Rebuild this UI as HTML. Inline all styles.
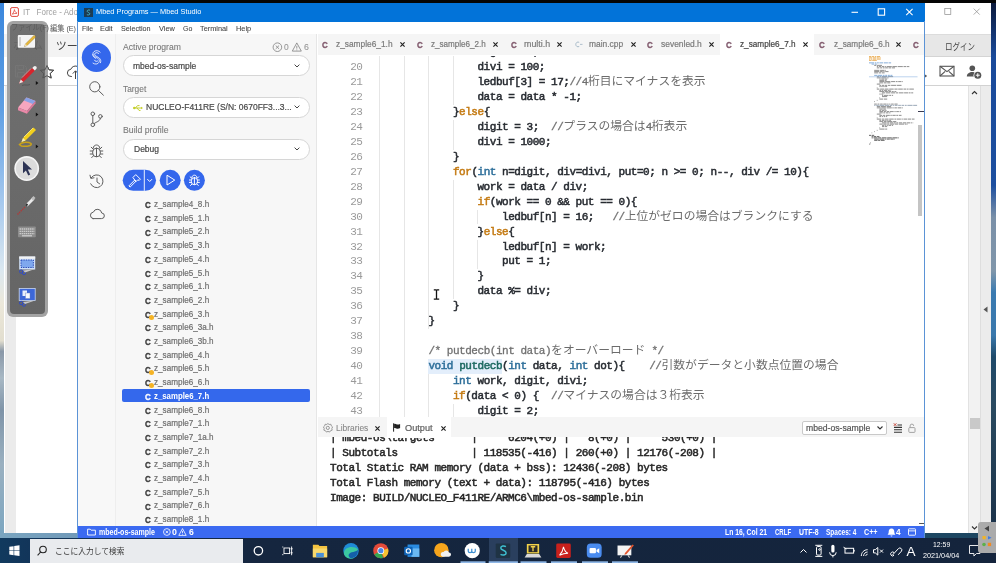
<!DOCTYPE html>
<html><head><meta charset="utf-8"><title>Mbed Studio</title>
<style>
*{box-sizing:border-box;margin:0;padding:0}
html,body{width:996px;height:563px;overflow:hidden;background:#fff}
body{position:relative;filter:blur(0.4px);font-family:"Liberation Sans","Noto Sans CJK JP",sans-serif;font-size:10px;color:#333}
.a{position:absolute}
.t{position:absolute;white-space:pre;line-height:1}
svg{position:absolute;overflow:visible}
.code{position:absolute;left:380px;white-space:pre;font-family:"Liberation Mono","Noto Sans CJK JP",monospace;font-weight:normal;-webkit-text-stroke:0.5px currentColor;font-size:11px;letter-spacing:-0.47px;line-height:14.94px;height:14.94px;color:#272b31}
.ln{position:absolute;left:332px;width:30.5px;white-space:pre;font-family:"Liberation Mono",monospace;font-size:11px;letter-spacing:-0.47px;line-height:14.94px;color:#9a9a9a;text-align:right}
.k{color:#c47a12}.ty{color:#2e6f9a}.fn{color:#1d6a62}
.cm{color:#707070;font-weight:normal;line-height:0;-webkit-text-stroke:0.3px #707070}
.cj{font-family:"Noto Sans CJK JP",sans-serif;font-weight:normal;letter-spacing:0;font-size:11.8px;color:#6c6c6c;line-height:0;-webkit-text-stroke:0}
.out{position:absolute;left:330px;white-space:pre;font-family:"Liberation Mono",monospace;font-weight:normal;-webkit-text-stroke:0.5px currentColor;font-size:11px;letter-spacing:-0.46px;line-height:15px;color:#262626}
.file{position:absolute;left:154px;font-size:9.6px;color:#6a6a6a;white-space:pre;line-height:13.7px;height:13.7px}
.ci{position:absolute;left:144.5px;font-size:10px;font-weight:bold;color:#3c3c3c;line-height:13.7px;height:13.7px}
.tab{position:absolute;top:35px;height:20px;font-size:9.6px;color:#777;white-space:pre;line-height:20px}
.lbl{position:absolute;left:123px;font-size:10.3px;color:#7a7a7a;line-height:1;white-space:pre}
.dd{position:absolute;left:123px;width:186px;height:21px;border:1px solid #d4d4d4;border-radius:11px;background:#fff}
.dd span{position:absolute;left:11px;top:4.5px;font-size:10.3px;color:#444;line-height:1;white-space:pre}

</style></head><body>
<div class="a" style="left:0;top:0;width:996px;height:2.500px;background:#050505"></div>
<div class="a" style="left:0;top:3px;width:5px;height:536px;background:linear-gradient(#3a86dc 0,#5f9fe4 20%,#a5c8ee 37%,#dce8f0 50%,#ece8da 56%,#e2decf 63%,#8a98a8 65%,#a8b8c4 70%,#7f94a8 76%,#9ab0c0 86%,#7aa5c0 100%)"></div>
<div class="a" style="left:0;top:530px;width:996px;height:9px;background:linear-gradient(90deg,#7aa5c0 0,#7099b8 8%,#2a5a78 50%,#1c4560 100%)"></div>
<div class="a" style="left:4px;top:3px;width:987px;height:530px;background:#fff"></div>
<div class="a" style="left:991px;top:3px;width:5px;height:536px;background:linear-gradient(#0c1a3c 0,#1a4a9a 10%,#1d4f9f 34%,#7a90a8 40%,#8096aa 50%,#3a7ab0 54%,#3a78ac 62%,#1f4a6a 66%,#2a4a60 75%,#1a3048 100%)"></div>
<!-- left part -->
<svg style="left:10px;top:6.500px" width="9" height="10" viewBox="0 0 9 10"><rect x="0.600" y="0.600" width="7.800" height="8.800" rx="1.500" fill="#fff" stroke="#e0443a" stroke-width="1"/><path d="M2.200 7.200c1.200-1.200 2-3 2.200-4.600c0.300 1.600 1.300 3 2.600 3.700c-1.600 0-3.300 0.300-4.800 0.900z" fill="none" stroke="#e0443a" stroke-width="0.800"/></svg>
<div class="t" style="left:23px;top:7.800px;font-size:8.600px;color:#a0a0a0;transform:scaleX(0.93);transform-origin:0 0">IT   Force - Adobe</div>
<div class="t" style="left:50px;top:24.600px;font-size:8px;color:#555;transform:scaleX(0.90);transform-origin:0 0">編集 (E)</div>
<div class="a" style="left:4px;top:34px;width:74px;height:22.500px;background:#f3f3f3"></div>
<div class="t" style="left:55.800px;top:41.300px;font-size:11px;color:#444">ツール</div>
<div class="a" style="left:4px;top:85.300px;width:74px;height:0.800px;background:#d2d2d2"></div>
<svg style="left:38px;top:62px" width="40" height="18" viewBox="38 62 40 18"><g fill="none" stroke="#444" stroke-width="1"><path d="M47 65.500l2 4.300l4.700 0.500l-3.500 3.200l1 4.600l-4.200-2.400l-4.200 2.400l1-4.600l-3.500-3.200l4.700-0.500z" stroke-linejoin="round"/><path d="M72 76.500h-0.800a3.600 3.600 0 0 1-0.400-7.200a5 5 0 0 1 7.200-2.600"/><path d="M75.500 79v-8M72.800 73.600l2.700-2.800l2.700 2.800"/></g></svg>
<div class="a" style="left:4.500px;top:86px;width:11px;height:447px;background:#ebebeb"></div>
<!-- right part -->
<svg style="left:940px;top:5px" width="50" height="14" viewBox="940 5 50 14"><g fill="none" stroke="#8a8a8a" stroke-width="0.700"><rect x="944.800" y="8.600" width="6" height="6"/><path d="M973.700 8.600l6 6M979.700 8.600l-6 6"/></g></svg>
<div class="a" style="left:925px;top:34px;width:66px;height:23px;background:#e7e7e7;border-top:1px solid #dcdcdc;border-bottom:1px solid #d4d4d4"></div>
<div class="t" style="left:944.600px;top:41.600px;font-size:9.600px;color:#444;transform:scaleX(0.78);transform-origin:0 0">ログイン</div>
<svg style="left:925px;top:60px" width="66" height="22" viewBox="925 60 66 22">
<path d="M925.200 74.500l1.800 1.500l-1.800 1.500z" fill="#333"/>
<g fill="none" stroke="#555" stroke-width="1.100"><rect x="940" y="66.300" width="14" height="9.700"/><path d="M940 66.300l7 5.300l7-5.300M940 76l5.200-4.600M954 76l-5.200-4.600"/></g>
<circle cx="972.300" cy="68.300" r="2.800" fill="#555"/><path d="M966.800 76.500c0-6 11-6 11 0z" fill="#555"/>
<circle cx="977.800" cy="75.200" r="4.300" fill="#fff"/><circle cx="977.800" cy="75.200" r="3.500" fill="#555"/><path d="M975.800 75.200h4M977.800 73.200v4" stroke="#fff" stroke-width="1"/>
</svg>
<div class="a" style="left:925px;top:85.300px;width:66px;height:0.800px;background:#d2d2d2"></div>
<div class="a" style="left:968.300px;top:86px;width:12px;height:447px;background:#f2f2f2;border-left:1px solid #e2e2e2"></div>
<div class="a" style="left:980px;top:86px;width:11px;height:447px;background:#ececec;border-left:1px solid #dedede"></div>
<div class="a" style="left:969.500px;top:418px;width:10px;height:10.700px;background:#c9c9c9"></div>
<svg style="left:968px;top:88px" width="24" height="446" viewBox="968 88 24 446"><g fill="none" stroke="#333" stroke-width="1.100"><path d="M972 94l2.500-2.500l2.500 2.500"/><path d="M972 526.500l2.500 2.500l2.500-2.500"/></g><path d="M987.500 306.500l-4 3l4 3z" fill="#555"/></svg>

<div class="a" style="left:6.5px;top:21.300px;width:41.500px;height:295.700px;border-radius:6px;background:#a3a3a3"></div>
<div class="a" style="left:9.500px;top:24px;width:35.500px;height:289.500px;border-radius:4px;background:linear-gradient(#707070,#656565)"></div>
<div class="t" style="left:11px;top:23.500px;font-size:8px;color:#5c5c5c;transform:scaleX(0.9);transform-origin:0 0">ファイル(F)</div>
<div class="t" style="left:13px;top:40.500px;font-size:10px;color:#636363">ホーム</div>
<svg style="left:9px;top:23px" width="37" height="291" viewBox="9 23 37 291">
<path d="M47 65.500l2 4.300l4.700 0.500l-3.500 3.200l1 4.600l-4.200-2.400l-4.200 2.400l1-4.600l-3.500-3.200l4.700-0.500z" fill="none" stroke="#505050" stroke-width="0.9" stroke-linejoin="round" clip-path="inset(0 0 0 0)"/>
<!-- save icon ghost -->
<path d="M15.500 65.500h9l2 2v9.500h-11zM18 65.500v4h5.500v-4M17.500 77v-4.500h7v4.500" fill="none" stroke="#757575" stroke-width="1"/>
<!-- whiteboard + pencil -->
<rect x="17.800" y="35" width="17.200" height="12.800" rx="1" fill="#f4f4f4"/>
<path d="M20 37v9" stroke="#999" stroke-width="0.800"/>
<path d="M24.500 46.500l1-2.600l8.600-8.600l1.600 1.600l-8.600 8.600z" fill="#e8b93a" stroke="#8a6a1a" stroke-width="0.400"/>
<path d="M24.500 46.500l1-2.600l1.600 1.600z" fill="#f3e2b8"/>
<path d="M16 49.500l2-1.500M37 49.500l-2-1.500" stroke="#555" stroke-width="0.800"/>
<!-- red pen -->
<path d="M19 83.500l1.800-4l11.500-11.500l2.500 2.500l-11.500 11.500z" fill="#d8242c"/>
<path d="M32.300 68l1.400-1.400c0.700-0.700 1.800-0.700 2.500 0c0.700 0.700 0.700 1.800 0 2.500l-1.400 1.400z" fill="#f0f0f0"/>
<path d="M19 83.500l1.800-4l2.500 2.500z" fill="#e8e8e8"/>
<path d="M22 77.500l9-9" stroke="#f08a8a" stroke-width="0.800"/>
<path d="M22 85.500c3-1.500 5 0.500 8-1" fill="none" stroke="#555" stroke-width="0.900"/>
<path d="M35.800 81l2.600 2l-2.600 2z" fill="#111"/>
<!-- eraser -->
<path d="M18 107.500l8.500-10l9 3.500l-8.500 10z" fill="#f7a6bf"/>
<path d="M26.500 97.500l9 3.500l-2.600 3l-9-3.500z" fill="#8aa2e6"/>
<path d="M18 107.500l9 3.500v2.800l-9-3.500z" fill="#e989a8"/>
<path d="M27 111l8.500-10v2.600l-8.500 10.200z" fill="#d9789a"/>
<path d="M35.800 112.500l2.600 2l-2.600 2z" fill="#111"/>
<!-- highlighter -->
<path d="M21.500 142l1.500-4l10.500-10.500l2.500 2.500l-10.500 10.500z" fill="#f2cf1d"/>
<path d="M21.500 142l1.500-4l2.500 2.500z" fill="#f3ecc0"/>
<path d="M24 137l9-9" stroke="#fbe97a" stroke-width="0.900"/>
<path d="M19.500 144.500c2-2.500 9-3 11.500-1c1.500 1.500-3 3.500-9.500 2.500z" fill="none" stroke="#c9a21a" stroke-width="1.500"/>
<path d="M35.800 144.500l2.600 2l-2.600 2z" fill="#111"/>
<!-- cursor circle -->
<circle cx="26.700" cy="168.500" r="12.400" fill="#f6f6f6"/>
<circle cx="26.700" cy="168.500" r="10.800" fill="#dcdcdc"/>
<path d="M23 161l9 8.500h-4.200l2.400 5l-1.900 0.900l-2.400-5l-2.900 2.900z" fill="#2c3354"/>
<!-- laser pointer -->
<path d="M25.500 204.500l7-7l2 2l-7 7z" fill="#e9e9e9"/>
<path d="M31 198.500l2.500-2.500l2 2l-2.500 2.500z" fill="#bdbdbd"/>
<path d="M27.500 204l-1.500 1.500" stroke="#333" stroke-width="2"/>
<path d="M25 207l-7.500 7.500" stroke="#b03a3a" stroke-width="1.400" stroke-dasharray="1.500 0.800"/>
<!-- keyboard -->
<rect x="18" y="226.600" width="17.800" height="10.700" rx="0.800" fill="#8c8c8c"/>
<path d="M19.500 229h15M19.500 231.300h15M19.500 233.600h15" stroke="#c9c9c9" stroke-width="1.300" stroke-dasharray="1.500 0.600"/>
<path d="M22 235.800h10" stroke="#d5d5d5" stroke-width="1.100"/>
<!-- screen capture 1 -->
<rect x="19.200" y="256.500" width="16" height="13" fill="#cfe0f8"/>
<rect x="19.200" y="256.500" width="16" height="2.200" fill="#f2f2f2"/>
<rect x="21" y="260" width="12.400" height="7.500" fill="#7fa8ee" stroke="#1f3fae" stroke-width="0.900" stroke-dasharray="1.400 1"/>
<circle cx="21.200" cy="271.500" r="1.700" fill="none" stroke="#2d49c9" stroke-width="0.900"/><circle cx="24" cy="273" r="1.700" fill="none" stroke="#2d49c9" stroke-width="0.900"/>
<path d="M23 270.500l12-1.500l-10 3.600z" fill="#c8c8c8"/>
<!-- screen capture 2 -->
<rect x="19.200" y="288.500" width="16" height="12" fill="#3d67d8" stroke="#c9d6f2" stroke-width="0.800"/>
<rect x="22.500" y="290.500" width="4.500" height="5.500" fill="#e9eefa"/><rect x="25.500" y="293" width="4.500" height="5.500" fill="#f6f8fd" stroke="#6a7fbf" stroke-width="0.400"/>
<circle cx="21.200" cy="303" r="1.700" fill="none" stroke="#2d49c9" stroke-width="0.900"/><circle cx="24" cy="304.600" r="1.700" fill="none" stroke="#2d49c9" stroke-width="0.900"/>
<path d="M23 302l12-1.500l-10 3.600z" fill="#c8c8c8"/>
</svg>

<div class="a" style="left:77px;top:3px;width:848px;height:536px;background:#fff;"></div>
<div class="a" style="left:77px;top:2.5px;width:848px;height:19px;background:#0273d9;"></div>
<svg style="left:83.5px;top:7.5px" width="9" height="9" viewBox="0 0 9 9"><rect width="9" height="9" fill="#1d3c52"/><path d="M6 2.2C4.5 1.6 3 2.2 3.2 3.4C3.4 4.6 5.8 4.4 5.8 5.8C5.8 7 4 7.2 2.9 6.6" fill="none" stroke="#45b5c9" stroke-width="0.9"/></svg>
<div class="t" style="left:96.00px;top:7.34px;font-size:8.1px;line-height:9.72px;color:#fff;transform:scaleX(0.9119);transform-origin:0 50%;">Mbed Programs — Mbed Studio</div>
<svg style="left:850px;top:3px" width="70" height="18" viewBox="0 0 70 18"><g stroke="#fff" stroke-width="1.1" fill="none"><path d="M1.5 9.3h6.5"/><rect x="28.2" y="5.8" width="6.4" height="6.4"/><path d="M56.2 5.8l6.4 6.4M62.6 5.8l-6.4 6.4"/></g></svg>
<div class="t" style="left:81.70px;top:23.50px;font-size:8.0px;line-height:9.60px;color:#444;-webkit-text-stroke:0.08px #444;transform:scaleX(0.8611);transform-origin:0 50%;">File</div>
<div class="t" style="left:100.30px;top:23.50px;font-size:8.0px;line-height:9.60px;color:#444;-webkit-text-stroke:0.08px #444;transform:scaleX(0.9140);transform-origin:0 50%;">Edit</div>
<div class="t" style="left:121.20px;top:23.50px;font-size:8.0px;line-height:9.60px;color:#444;-webkit-text-stroke:0.08px #444;transform:scaleX(0.8995);transform-origin:0 50%;">Selection</div>
<div class="t" style="left:158.80px;top:23.50px;font-size:8.0px;line-height:9.60px;color:#444;-webkit-text-stroke:0.08px #444;transform:scaleX(0.9189);transform-origin:0 50%;">View</div>
<div class="t" style="left:182.70px;top:23.50px;font-size:8.0px;line-height:9.60px;color:#444;-webkit-text-stroke:0.08px #444;transform:scaleX(0.8715);transform-origin:0 50%;">Go</div>
<div class="t" style="left:200.20px;top:23.50px;font-size:8.0px;line-height:9.60px;color:#444;-webkit-text-stroke:0.08px #444;transform:scaleX(0.9163);transform-origin:0 50%;">Terminal</div>
<div class="t" style="left:235.90px;top:23.50px;font-size:8.0px;line-height:9.60px;color:#444;-webkit-text-stroke:0.08px #444;transform:scaleX(0.9178);transform-origin:0 50%;">Help</div>
<div class="a" style="left:78px;top:34px;width:38px;height:492px;background:#f8f8f8;"></div>
<div class="a" style="left:114.5px;top:34px;width:1.5px;height:492px;background:#eeeeee;"></div>
<div class="a" style="left:116px;top:34px;width:200px;height:492px;background:#f7f7f7;"></div>
<div class="a" style="left:316px;top:34px;width:1.2px;height:492px;background:#e6e6e6;"></div>
<svg style="left:78px;top:34px" width="38" height="200" viewBox="78 34 38 200">
<circle cx="96.4" cy="57.4" r="14.6" fill="#3467ec"/>
<g fill="none" stroke="#fff" stroke-width="0.8" stroke-linecap="round">
<path d="M100.2 52.2c-1.2-1.6-4.4-2.2-6.2-0.6c-2 1.8-0.8 4.2 1.6 5.4c2.6 1.3 4.6 2.6 3.4 5.2c-1 2.2-4.2 2.4-6 1"/>
<path d="M98.6 53.4c-0.9-0.9-2.6-1-3.5-0.2c-1 1-0.3 2.300 1.300 3.100c2.900 1.400 5.400 3.200 4.100 6.400"/>
<path d="M94.400 60.200c0.700 1.400 2.700 1.700 3.500 0.600"/>
<path d="M92.600 54.600c0.100 2 1.800 3 3.300 3.800"/>
</g>
<g fill="none" stroke="#5e5e5e" stroke-width="1" stroke-linecap="round" stroke-linejoin="round">
<circle cx="94.8" cy="86.800" r="5.100"/><path d="M98.600 90.600l4.800 4.600"/>
<circle cx="92.800" cy="113.800" r="1.800"/><circle cx="92.800" cy="124.800" r="1.800"/><circle cx="100.400" cy="116.400" r="1.800"/>
<path d="M92.800 115.600v7.400M100.400 118.200c0 3-3.600 3.400-6 5.200"/>
<!-- bug -->
<path d="M93.200 148.200c0-4.400 6.600-4.400 6.600 0"/>
<rect x="92.700" y="148.200" width="7.600" height="8.600" rx="3.600"/>
<path d="M96.500 148.400v8.200M92.700 151h-2.500M92.700 154h-2.500M100.300 151h2.500M100.300 154h2.500M93 149l-1.800-1.800M100 149l1.800-1.800M93.300 156l-1.600 1.600M99.700 156l1.600 1.600"/>
<!-- history -->
<path d="M91.300 177.600a6.400 6.400 0 1 1-0.600 6.200"/>
<path d="M90 175.200l0.800 3.200l3.200-0.600"/>
<path d="M97 178v4l2.600 1.800"/>
<!-- cloud -->
<path d="M93 218.600h8.400a2.800 2.800 0 0 0 0.300-5.600a4.300 4.300 0 0 0-8.300-0.900a3.300 3.300 0 0 0-0.400 6.500z"/>
</g>
</svg>

<div class="t" style="left:123.00px;top:41.06px;font-size:9.9px;line-height:11.88px;color:#787878;-webkit-text-stroke:0.1px #787878;transform:scaleX(0.8713);transform-origin:0 50%;">Active program</div>
<div class="t" style="left:123.00px;top:82.96px;font-size:9.9px;line-height:11.88px;color:#787878;-webkit-text-stroke:0.1px #787878;transform:scaleX(0.8469);transform-origin:0 50%;">Target</div>
<div class="t" style="left:123.00px;top:124.26px;font-size:9.9px;line-height:11.88px;color:#787878;-webkit-text-stroke:0.1px #787878;transform:scaleX(0.8816);transform-origin:0 50%;">Build profile</div>
<div class="a" style="left:122.5px;top:54.8px;width:187px;height:21.7px;border:1px solid #d6d6d6;border-radius:10.5px;background:#fff"></div>
<div class="t" style="left:133.30px;top:59.76px;font-size:9.9px;line-height:11.88px;color:#484848;-webkit-text-stroke:0.22px #484848;transform:scaleX(0.8613);transform-origin:0 50%;">mbed-os-sample</div>
<svg style="left:293.5px;top:63.9px" width="6" height="4" viewBox="0 0 6 4"><path d="M0.6 0.6L3 3L5.4 0.6" fill="none" stroke="#444" stroke-width="1"/></svg>
<div class="a" style="left:122.5px;top:97px;width:187px;height:21px;border:1px solid #d6d6d6;border-radius:10.5px;background:#fff"></div>
<div class="t" style="left:146.00px;top:101.26px;font-size:9.9px;line-height:11.88px;color:#484848;-webkit-text-stroke:0.22px #484848;transform:scaleX(0.8598);transform-origin:0 50%;">NUCLEO-F411RE (S/N: 0670FF3...3...</div>
<svg style="left:293.5px;top:105.4px" width="6" height="4" viewBox="0 0 6 4"><path d="M0.6 0.6L3 3L5.4 0.6" fill="none" stroke="#444" stroke-width="1"/></svg>
<div class="a" style="left:122.5px;top:138.7px;width:187px;height:21px;border:1px solid #d6d6d6;border-radius:10.5px;background:#fff"></div>
<div class="t" style="left:133.50px;top:142.96px;font-size:9.9px;line-height:11.88px;color:#484848;-webkit-text-stroke:0.22px #484848;transform:scaleX(0.8604);transform-origin:0 50%;">Debug</div>
<svg style="left:293.5px;top:147.1px" width="6" height="4" viewBox="0 0 6 4"><path d="M0.6 0.6L3 3L5.4 0.6" fill="none" stroke="#444" stroke-width="1"/></svg>
<svg style="left:132.5px;top:103.5px" width="10" height="8" viewBox="0 0 10 8"><g stroke="#c4cf2a" stroke-width="1" fill="none"><path d="M0.5 4h8"/><path d="M2.5 4l2-2.4h2"/><path d="M4 4l2 2.4h1.5"/></g><circle cx="1.3" cy="4" r="1.2" fill="#c4cf2a"/><path d="M8 2.7l2 1.3l-2 1.3z" fill="#c4cf2a"/></svg>
<svg style="left:272px;top:42px" width="32" height="11" viewBox="272 42 32 11"><g stroke="#858585" stroke-width="0.85" fill="none"><circle cx="277.4" cy="47.2" r="4.3"/><path d="M275.7 45.5l3.400 3.400M279.100 45.500l-3.400 3.400"/><path d="M296.800 42.900l4.500 8.200h-9z" stroke-linejoin="round"/><path d="M296.800 45.800v2.800M296.800 49.500v0.800"/></g></svg>
<div class="t" style="left:284.30px;top:41.36px;font-size:9.9px;line-height:11.88px;color:#979797;-webkit-text-stroke:0.1px #979797;transform:scaleX(0.8537);transform-origin:0 50%;">0</div>
<div class="t" style="left:304.00px;top:41.36px;font-size:9.9px;line-height:11.88px;color:#979797;-webkit-text-stroke:0.1px #979797;transform:scaleX(0.8900);transform-origin:0 50%;">6</div>
<svg style="left:122px;top:169px" width="84" height="23" viewBox="122 169 84 23">
<rect x="122.700" y="169.800" width="33.300" height="21" rx="10.500" fill="#3467ec"/>
<path d="M144.300 169.800v21" stroke="#fff" stroke-width="0.900"/>
<circle cx="170.200" cy="180.300" r="10.500" fill="#3467ec"/>
<circle cx="194.400" cy="180.300" r="10.500" fill="#3467ec"/>
<g fill="none" stroke="#fff" stroke-width="1" stroke-linecap="round" stroke-linejoin="round">
<!-- hammer -->
<path d="M129.200 185.600l5.600-5.600l1.200 1.200l-5.600 5.600z"/>
<path d="M133.200 177.200l2.600-2.600l4.600 4.600l-1.200 1.200l-1.400-0.600l-1.600 1.600z"/>
<!-- chevron -->
<path d="M147.600 179.400l2.100 2.100l2.100-2.100"/>
<!-- play -->
<path d="M167 175.600v9.400l7.400-4.700z"/>
<!-- bug -->
<path d="M191.800 177.700c0-3.500 5.200-3.500 5.200 0"/>
<rect x="191.400" y="177.700" width="6" height="7" rx="2.900"/>
<path d="M194.400 177.900v6.600M191.400 180h-2M191.400 182.400h-2M197.400 180h2M197.400 182.400h2M191.600 178.300l-1.500-1.500M197.200 178.300l1.500-1.500M191.800 184.200l-1.300 1.300M197 184.200l1.300 1.300"/>
</g>
</svg>

<div class="t" style="left:144.50px;top:199.14px;font-size:9.6px;line-height:11.52px;color:#383838;font-weight:bold;transform:scaleX(0.8366);transform-origin:0 50%;-webkit-text-stroke:0.35px;">C</div>
<div class="t" style="left:154.00px;top:198.06px;font-size:9.9px;line-height:11.88px;color:#6e6e6e;-webkit-text-stroke:0.22px #6e6e6e;transform:scaleX(0.8237);transform-origin:0 50%;">z_sample4_8.h</div>
<div class="t" style="left:144.50px;top:212.84px;font-size:9.6px;line-height:11.52px;color:#383838;font-weight:bold;transform:scaleX(0.8366);transform-origin:0 50%;-webkit-text-stroke:0.35px;">C</div>
<div class="t" style="left:154.00px;top:211.76px;font-size:9.9px;line-height:11.88px;color:#6e6e6e;-webkit-text-stroke:0.22px #6e6e6e;transform:scaleX(0.8237);transform-origin:0 50%;">z_sample5_1.h</div>
<div class="t" style="left:144.50px;top:226.54px;font-size:9.6px;line-height:11.52px;color:#383838;font-weight:bold;transform:scaleX(0.8366);transform-origin:0 50%;-webkit-text-stroke:0.35px;">C</div>
<div class="t" style="left:154.00px;top:225.46px;font-size:9.9px;line-height:11.88px;color:#6e6e6e;-webkit-text-stroke:0.22px #6e6e6e;transform:scaleX(0.8237);transform-origin:0 50%;">z_sample5_2.h</div>
<div class="t" style="left:144.50px;top:240.24px;font-size:9.6px;line-height:11.52px;color:#383838;font-weight:bold;transform:scaleX(0.8366);transform-origin:0 50%;-webkit-text-stroke:0.35px;">C</div>
<div class="t" style="left:154.00px;top:239.16px;font-size:9.9px;line-height:11.88px;color:#6e6e6e;-webkit-text-stroke:0.22px #6e6e6e;transform:scaleX(0.8237);transform-origin:0 50%;">z_sample5_3.h</div>
<div class="t" style="left:144.50px;top:253.94px;font-size:9.6px;line-height:11.52px;color:#383838;font-weight:bold;transform:scaleX(0.8366);transform-origin:0 50%;-webkit-text-stroke:0.35px;">C</div>
<div class="t" style="left:154.00px;top:252.86px;font-size:9.9px;line-height:11.88px;color:#6e6e6e;-webkit-text-stroke:0.22px #6e6e6e;transform:scaleX(0.8237);transform-origin:0 50%;">z_sample5_4.h</div>
<div class="t" style="left:144.50px;top:267.64px;font-size:9.6px;line-height:11.52px;color:#383838;font-weight:bold;transform:scaleX(0.8366);transform-origin:0 50%;-webkit-text-stroke:0.35px;">C</div>
<div class="t" style="left:154.00px;top:266.56px;font-size:9.9px;line-height:11.88px;color:#6e6e6e;-webkit-text-stroke:0.22px #6e6e6e;transform:scaleX(0.8237);transform-origin:0 50%;">z_sample5_5.h</div>
<div class="t" style="left:144.50px;top:281.34px;font-size:9.6px;line-height:11.52px;color:#383838;font-weight:bold;transform:scaleX(0.8366);transform-origin:0 50%;-webkit-text-stroke:0.35px;">C</div>
<div class="t" style="left:154.00px;top:280.26px;font-size:9.9px;line-height:11.88px;color:#6e6e6e;-webkit-text-stroke:0.22px #6e6e6e;transform:scaleX(0.8237);transform-origin:0 50%;">z_sample6_1.h</div>
<div class="t" style="left:144.50px;top:295.04px;font-size:9.6px;line-height:11.52px;color:#383838;font-weight:bold;transform:scaleX(0.8366);transform-origin:0 50%;-webkit-text-stroke:0.35px;">C</div>
<div class="t" style="left:154.00px;top:293.96px;font-size:9.9px;line-height:11.88px;color:#6e6e6e;-webkit-text-stroke:0.22px #6e6e6e;transform:scaleX(0.8237);transform-origin:0 50%;">z_sample6_2.h</div>
<div class="t" style="left:144.50px;top:308.74px;font-size:9.6px;line-height:11.52px;color:#383838;font-weight:bold;transform:scaleX(0.8366);transform-origin:0 50%;-webkit-text-stroke:0.35px;">C</div>
<div class="t" style="left:154.00px;top:307.66px;font-size:9.9px;line-height:11.88px;color:#6e6e6e;-webkit-text-stroke:0.22px #6e6e6e;transform:scaleX(0.8237);transform-origin:0 50%;">z_sample6_3.h</div>
<div class="a" style="left:148.5px;top:314.8px;width:5px;height:5px;border-radius:50%;background:#f5b324"></div>
<div class="t" style="left:144.50px;top:322.44px;font-size:9.6px;line-height:11.52px;color:#383838;font-weight:bold;transform:scaleX(0.8366);transform-origin:0 50%;-webkit-text-stroke:0.35px;">C</div>
<div class="t" style="left:154.00px;top:321.36px;font-size:9.9px;line-height:11.88px;color:#6e6e6e;-webkit-text-stroke:0.22px #6e6e6e;transform:scaleX(0.8204);transform-origin:0 50%;">z_sample6_3a.h</div>
<div class="t" style="left:144.50px;top:336.14px;font-size:9.6px;line-height:11.52px;color:#383838;font-weight:bold;transform:scaleX(0.8366);transform-origin:0 50%;-webkit-text-stroke:0.35px;">C</div>
<div class="t" style="left:154.00px;top:335.06px;font-size:9.9px;line-height:11.88px;color:#6e6e6e;-webkit-text-stroke:0.22px #6e6e6e;transform:scaleX(0.8204);transform-origin:0 50%;">z_sample6_3b.h</div>
<div class="t" style="left:144.50px;top:349.84px;font-size:9.6px;line-height:11.52px;color:#383838;font-weight:bold;transform:scaleX(0.8366);transform-origin:0 50%;-webkit-text-stroke:0.35px;">C</div>
<div class="t" style="left:154.00px;top:348.76px;font-size:9.9px;line-height:11.88px;color:#6e6e6e;-webkit-text-stroke:0.22px #6e6e6e;transform:scaleX(0.8237);transform-origin:0 50%;">z_sample6_4.h</div>
<div class="t" style="left:144.50px;top:363.54px;font-size:9.6px;line-height:11.52px;color:#383838;font-weight:bold;transform:scaleX(0.8366);transform-origin:0 50%;-webkit-text-stroke:0.35px;">C</div>
<div class="t" style="left:154.00px;top:362.46px;font-size:9.9px;line-height:11.88px;color:#6e6e6e;-webkit-text-stroke:0.22px #6e6e6e;transform:scaleX(0.8237);transform-origin:0 50%;">z_sample6_5.h</div>
<div class="a" style="left:148.5px;top:369.6px;width:5px;height:5px;border-radius:50%;background:#f5b324"></div>
<div class="t" style="left:144.50px;top:377.24px;font-size:9.6px;line-height:11.52px;color:#383838;font-weight:bold;transform:scaleX(0.8366);transform-origin:0 50%;-webkit-text-stroke:0.35px;">C</div>
<div class="t" style="left:154.00px;top:376.16px;font-size:9.9px;line-height:11.88px;color:#6e6e6e;-webkit-text-stroke:0.22px #6e6e6e;transform:scaleX(0.8237);transform-origin:0 50%;">z_sample6_6.h</div>
<div class="a" style="left:148.5px;top:383.3px;width:5px;height:5px;border-radius:50%;background:#f5b324"></div>
<div class="a" style="left:121.5px;top:388.9px;width:188.5px;height:13.6px;background:#3468ec;border-radius:2px"></div>
<div class="t" style="left:144.50px;top:390.94px;font-size:9.6px;line-height:11.52px;color:#fff;font-weight:bold;transform:scaleX(0.8366);transform-origin:0 50%;-webkit-text-stroke:0.35px;">C</div>
<div class="t" style="left:154.00px;top:389.86px;font-size:9.9px;line-height:11.88px;color:#fff;font-weight:bold;transform:scaleX(0.7913);transform-origin:0 50%;">z_sample6_7.h</div>
<div class="t" style="left:144.50px;top:404.64px;font-size:9.6px;line-height:11.52px;color:#383838;font-weight:bold;transform:scaleX(0.8366);transform-origin:0 50%;-webkit-text-stroke:0.35px;">C</div>
<div class="t" style="left:154.00px;top:403.56px;font-size:9.9px;line-height:11.88px;color:#6e6e6e;-webkit-text-stroke:0.22px #6e6e6e;transform:scaleX(0.8237);transform-origin:0 50%;">z_sample6_8.h</div>
<div class="t" style="left:144.50px;top:418.34px;font-size:9.6px;line-height:11.52px;color:#383838;font-weight:bold;transform:scaleX(0.8366);transform-origin:0 50%;-webkit-text-stroke:0.35px;">C</div>
<div class="t" style="left:154.00px;top:417.26px;font-size:9.9px;line-height:11.88px;color:#6e6e6e;-webkit-text-stroke:0.22px #6e6e6e;transform:scaleX(0.8237);transform-origin:0 50%;">z_sample7_1.h</div>
<div class="t" style="left:144.50px;top:432.04px;font-size:9.6px;line-height:11.52px;color:#383838;font-weight:bold;transform:scaleX(0.8366);transform-origin:0 50%;-webkit-text-stroke:0.35px;">C</div>
<div class="t" style="left:154.00px;top:430.96px;font-size:9.9px;line-height:11.88px;color:#6e6e6e;-webkit-text-stroke:0.22px #6e6e6e;transform:scaleX(0.8204);transform-origin:0 50%;">z_sample7_1a.h</div>
<div class="t" style="left:144.50px;top:445.74px;font-size:9.6px;line-height:11.52px;color:#383838;font-weight:bold;transform:scaleX(0.8366);transform-origin:0 50%;-webkit-text-stroke:0.35px;">C</div>
<div class="t" style="left:154.00px;top:444.66px;font-size:9.9px;line-height:11.88px;color:#6e6e6e;-webkit-text-stroke:0.22px #6e6e6e;transform:scaleX(0.8237);transform-origin:0 50%;">z_sample7_2.h</div>
<div class="t" style="left:144.50px;top:459.44px;font-size:9.6px;line-height:11.52px;color:#383838;font-weight:bold;transform:scaleX(0.8366);transform-origin:0 50%;-webkit-text-stroke:0.35px;">C</div>
<div class="t" style="left:154.00px;top:458.36px;font-size:9.9px;line-height:11.88px;color:#6e6e6e;-webkit-text-stroke:0.22px #6e6e6e;transform:scaleX(0.8237);transform-origin:0 50%;">z_sample7_3.h</div>
<div class="t" style="left:144.50px;top:473.14px;font-size:9.6px;line-height:11.52px;color:#383838;font-weight:bold;transform:scaleX(0.8366);transform-origin:0 50%;-webkit-text-stroke:0.35px;">C</div>
<div class="t" style="left:154.00px;top:472.06px;font-size:9.9px;line-height:11.88px;color:#6e6e6e;-webkit-text-stroke:0.22px #6e6e6e;transform:scaleX(0.8237);transform-origin:0 50%;">z_sample7_4.h</div>
<div class="t" style="left:144.50px;top:486.84px;font-size:9.6px;line-height:11.52px;color:#383838;font-weight:bold;transform:scaleX(0.8366);transform-origin:0 50%;-webkit-text-stroke:0.35px;">C</div>
<div class="t" style="left:154.00px;top:485.76px;font-size:9.9px;line-height:11.88px;color:#6e6e6e;-webkit-text-stroke:0.22px #6e6e6e;transform:scaleX(0.8237);transform-origin:0 50%;">z_sample7_5.h</div>
<div class="t" style="left:144.50px;top:500.54px;font-size:9.6px;line-height:11.52px;color:#383838;font-weight:bold;transform:scaleX(0.8366);transform-origin:0 50%;-webkit-text-stroke:0.35px;">C</div>
<div class="t" style="left:154.00px;top:499.46px;font-size:9.9px;line-height:11.88px;color:#6e6e6e;-webkit-text-stroke:0.22px #6e6e6e;transform:scaleX(0.8237);transform-origin:0 50%;">z_sample7_6.h</div>
<div class="t" style="left:144.50px;top:514.24px;font-size:9.6px;line-height:11.52px;color:#383838;font-weight:bold;transform:scaleX(0.8366);transform-origin:0 50%;-webkit-text-stroke:0.35px;">C</div>
<div class="t" style="left:154.00px;top:513.16px;font-size:9.9px;line-height:11.88px;color:#6e6e6e;-webkit-text-stroke:0.22px #6e6e6e;transform:scaleX(0.8237);transform-origin:0 50%;">z_sample8_1.h</div><div class="a" style="left:317.5px;top:56px;width:606.5px;height:361.500px;overflow:hidden;background:#fff">
<div class="a" style="left:110.4px;top:303.3px;width:74.6px;height:14.4px;background:#e3eefb"></div>
<div class="a" style="left:61.5px;top:-10.7px;width:1px;height:388.4px;background:#e6e6e6"></div>
<div class="a" style="left:86.0px;top:-10.7px;width:1px;height:388.4px;background:#e6e6e6"></div>
<div class="a" style="left:110.5px;top:-10.7px;width:1px;height:283.9px;background:#e6e6e6"></div>
<div class="a" style="left:110.5px;top:318.0px;width:1px;height:59.8px;background:#e6e6e6"></div>
<div class="a" style="left:135.1px;top:-10.7px;width:1px;height:59.8px;background:#e6e6e6"></div>
<div class="a" style="left:135.1px;top:64.0px;width:1px;height:29.9px;background:#e6e6e6"></div>
<div class="a" style="left:135.1px;top:123.8px;width:1px;height:119.5px;background:#e6e6e6"></div>
<div class="a" style="left:135.1px;top:347.8px;width:1px;height:29.9px;background:#e6e6e6"></div>
<div class="a" style="left:159.6px;top:153.6px;width:1px;height:14.9px;background:#e6e6e6"></div>
<div class="a" style="left:159.6px;top:183.5px;width:1px;height:29.9px;background:#e6e6e6"></div>
<div class="ln" style="left:14.5px;top:-10.71px">19</div>
<div class="code" style="left:61.9px;top:-10.71px">                digit = 2;</div>
<div class="ln" style="left:14.5px;top:4.23px">20</div>
<div class="code" style="left:61.9px;top:4.23px">                divi = 100;</div>
<div class="ln" style="left:14.5px;top:19.17px">21</div>
<div class="code" style="left:61.9px;top:19.17px">                ledbuf[3] = 17;<span class="cm">//4<span class="cj">桁目にマイナスを表示</span></span></div>
<div class="ln" style="left:14.5px;top:34.11px">22</div>
<div class="code" style="left:61.9px;top:34.11px">                data = data * -1;</div>
<div class="ln" style="left:14.5px;top:49.05px">23</div>
<div class="code" style="left:61.9px;top:49.05px">            }<span class="k">else</span>{</div>
<div class="ln" style="left:14.5px;top:63.99px">24</div>
<div class="code" style="left:61.9px;top:63.99px">                digit = 3;  <span class="cm">//<span class="cj">プラスの場合は</span>4<span class="cj">桁表示</span></span></div>
<div class="ln" style="left:14.5px;top:78.93px">25</div>
<div class="code" style="left:61.9px;top:78.93px">                divi = 1000;</div>
<div class="ln" style="left:14.5px;top:93.87px">26</div>
<div class="code" style="left:61.9px;top:93.87px">            }</div>
<div class="ln" style="left:14.5px;top:108.81px">27</div>
<div class="code" style="left:61.9px;top:108.81px">            <span class="k">for</span>(<span class="ty">int</span> n=digit, div=divi, put=0; n &gt;= 0; n--, div /= 10){</div>
<div class="ln" style="left:14.5px;top:123.75px">28</div>
<div class="code" style="left:61.9px;top:123.75px">                work = data / div;</div>
<div class="ln" style="left:14.5px;top:138.69px">29</div>
<div class="code" style="left:61.9px;top:138.69px">                <span class="k">if</span>(work == 0 &amp;&amp; put == 0){</div>
<div class="ln" style="left:14.5px;top:153.63px">30</div>
<div class="code" style="left:61.9px;top:153.63px">                    ledbuf[n] = 16;   <span class="cm">//<span class="cj">上位がゼロの場合はブランクにする</span></span></div>
<div class="ln" style="left:14.5px;top:168.57px">31</div>
<div class="code" style="left:61.9px;top:168.57px">                }<span class="k">else</span>{</div>
<div class="ln" style="left:14.5px;top:183.51px">32</div>
<div class="code" style="left:61.9px;top:183.51px">                    ledbuf[n] = work;</div>
<div class="ln" style="left:14.5px;top:198.45px">33</div>
<div class="code" style="left:61.9px;top:198.45px">                    put = 1;</div>
<div class="ln" style="left:14.5px;top:213.39px">34</div>
<div class="code" style="left:61.9px;top:213.39px">                }</div>
<div class="ln" style="left:14.5px;top:228.33px">35</div>
<div class="code" style="left:61.9px;top:228.33px">                data %= div;</div>
<div class="ln" style="left:14.5px;top:243.27px">36</div>
<div class="code" style="left:61.9px;top:243.27px">            }</div>
<div class="ln" style="left:14.5px;top:258.21px">37</div>
<div class="code" style="left:61.9px;top:258.21px">        }</div>
<div class="ln" style="left:14.5px;top:273.15px">38</div>
<div class="ln" style="left:14.5px;top:288.09px">39</div>
<div class="code" style="left:61.9px;top:288.09px">        <span class="cm">/* putdecb(int data)<span class="cj">をオーバーロード</span> */</span></div>
<div class="ln" style="left:14.5px;top:303.03px">40</div>
<div class="code" style="left:61.9px;top:303.03px">        <span class="ty">void</span> <span class="fn">putdecb</span>(<span class="ty">int</span> data, <span class="ty">int</span> dot){    <span class="cm">//<span class="cj">引数がデータと小数点位置の場合</span></span></div>
<div class="ln" style="left:14.5px;top:317.97px">41</div>
<div class="code" style="left:61.9px;top:317.97px">            <span class="ty">int</span> work, digit, divi;</div>
<div class="ln" style="left:14.5px;top:332.91px">42</div>
<div class="code" style="left:61.9px;top:332.91px">            <span class="k">if</span>(data &lt; 0) {  <span class="cm">//<span class="cj">マイナスの場合は３桁表示</span></span></div>
<div class="ln" style="left:14.5px;top:347.85px">43</div>
<div class="code" style="left:61.9px;top:347.85px">                digit = 2;</div>
<svg style="left:551.0px;top:-0.5px" width="50" height="92" viewBox="0 0 50 92"><g stroke-width="0.95" opacity="0.95">
<path d="M0.0 0.60H2.0M2.6 0.60H5.2M5.9 0.60H7.2M7.8 0.60H11.1" stroke="#e9a84a"/>
<path d="M0.0 1.85H3.2M3.9 1.85H7.2M7.8 1.85H9.8M10.4 1.85H11.7" stroke="#e9a84a"/>
<path d="M0.0 3.10H1.3M2.0 3.10H3.2M3.9 3.10H7.2M7.8 3.10H11.7" stroke="#e9a84a"/>
<path d="M0.0 4.35H2.6M3.2 4.35H7.8" stroke="#e9a84a"/>
<path d="M0.0 6.85H5.2M5.9 6.85H7.2M7.8 6.85H9.8M10.4 6.85H14.3M15.0 6.85H18.9M19.5 6.85H22.1" stroke="#7aa7d6"/>
<path d="M2.6 8.10H5.2M5.9 8.10H7.8" stroke="#7aa7d6"/>
<path d="M5.2 9.35H7.2M7.8 9.35H13.0" stroke="#828282"/>
<path d="M7.8 10.60H9.1M9.8 10.60H12.3M13.0 10.60H15.0M15.6 10.60H16.9M17.6 10.60H22.8M23.4 10.60H27.9M28.6 10.60H33.8M34.5 10.60H37.1M37.7 10.60H40.3" stroke="#828282"/>
<path d="M7.8 11.85H10.4M11.1 11.85H13.0M13.7 11.85H15.6M16.2 11.85H18.9M19.5 11.85H22.1M22.8 11.85H26.0" stroke="#828282"/>
<path d="M5.2 14.35H10.4M11.1 14.35H15.6M16.2 14.35H16.9" stroke="#828282"/>
<path d="M5.2 15.60H10.4M11.1 15.60H13.7M14.3 15.60H15.6M16.2 15.60H19.5" stroke="#828282"/>
<path d="M5.2 16.85H9.1M9.8 16.85H12.3M13.0 16.85H15.6" stroke="#828282"/>
<path d="M5.2 19.35H8.5M9.1 19.35H13.0M13.7 19.35H15.6M16.2 19.35H18.2M18.9 19.35H20.8M21.4 19.35H23.4" stroke="#7aa7d6"/>
<path d="M7.8 20.60H10.4M11.1 20.60H12.3M13.0 20.60H18.2M18.9 20.60H24.1" stroke="#828282"/>
<path d="M7.8 21.85H11.7M12.3 21.85H17.6M18.2 21.85H19.5" stroke="#828282"/>
<path d="M10.4 23.10H11.7M12.3 23.10H15.0M15.6 23.10H18.2" stroke="#828282"/>
<path d="M10.4 24.35H15.0M15.6 24.35H17.6" stroke="#828282"/>
<path d="M10.4 25.60H15.6M16.2 25.60H21.4M22.1 25.60H26.0M26.7 25.60H28.6M29.2 25.60H32.5M33.1 25.60H33.8" stroke="#828282"/>
<path d="M10.4 26.85H14.3M15.0 26.85H17.6M18.2 26.85H21.4" stroke="#828282"/>
<path d="M7.8 28.10H11.1" stroke="#828282"/>
<path d="M10.4 29.35H12.3M13.0 29.35H15.0M15.6 29.35H18.2M18.9 29.35H21.4M22.1 29.35H27.3M27.9 29.35H32.5" stroke="#828282"/>
<path d="M10.4 30.60H11.7M12.3 30.60H13.7M14.3 30.60H15.6M16.2 30.60H18.2" stroke="#828282"/>
<path d="M7.8 31.85H8.5" stroke="#828282"/>
<path d="M7.8 33.10H10.4M11.1 33.10H15.0M15.6 33.10H19.5M20.2 33.10H24.7M25.4 33.10H28.6M29.2 33.10H33.8M34.5 33.10H37.1M37.7 33.10H39.6M40.3 33.10H44.9" stroke="#828282"/>
<path d="M10.4 34.35H12.3M13.0 34.35H14.3M15.0 34.35H18.2M18.9 34.35H20.8M21.4 34.35H22.1" stroke="#828282"/>
<path d="M10.4 35.60H15.0M15.6 35.60H18.9M19.5 35.60H22.1M22.8 35.60H24.7M25.4 35.60H27.3" stroke="#828282"/>
<path d="M13.0 36.85H16.2M16.9 36.85H21.4M22.1 36.85H26.0M26.7 36.85H29.2M29.9 36.85H34.5M35.1 36.85H39.0M39.6 36.85H41.6M42.2 36.85H44.2" stroke="#828282"/>
<path d="M10.4 38.10H11.7M12.3 38.10H14.3" stroke="#828282"/>
<path d="M13.0 39.35H14.3M15.0 39.35H19.5M20.2 39.35H22.1M22.8 39.35H24.1" stroke="#828282"/>
<path d="M13.0 40.60H18.2" stroke="#828282"/>
<path d="M10.4 41.85H11.1" stroke="#828282"/>
<path d="M10.4 43.10H14.3M15.0 43.10H18.2" stroke="#828282"/>
<path d="M7.8 44.35H8.5" stroke="#828282"/>
<path d="M5.2 45.60H5.9" stroke="#828282"/>
<path d="M5.2 48.10H7.8M8.5 48.10H10.4M11.1 48.10H13.7M14.3 48.10H17.6M18.2 48.10H19.5M20.2 48.10H21.4M22.1 48.10H24.7M25.4 48.10H28.6" stroke="#828282"/>
<path d="M5.2 49.35H6.5M7.2 49.35H9.8M10.4 49.35H15.0M15.6 49.35H20.2M20.8 49.35H23.4M24.1 49.35H25.4M26.0 49.35H28.6M29.2 49.35H31.9M32.5 49.35H35.1M35.8 49.35H37.7M38.4 49.35H43.6M44.2 49.35H48.1" stroke="#8f9fb0"/>
<path d="M7.8 50.60H11.1M11.7 50.60H16.9M17.6 50.60H22.1" stroke="#828282"/>
<path d="M7.8 51.85H11.7M12.3 51.85H16.9M17.6 51.85H22.8M23.4 51.85H24.7M25.4 51.85H27.9M28.6 51.85H32.5M33.1 51.85H33.8" stroke="#828282"/>
<path d="M10.4 53.10H13.7M14.3 53.10H16.9" stroke="#828282"/>
<path d="M10.4 54.35H12.3M13.0 54.35H15.6M16.2 54.35H17.6" stroke="#828282"/>
<path d="M10.4 55.60H14.3M15.0 55.60H16.9M17.6 55.60H20.2M20.8 55.60H24.7M25.4 55.60H26.7M27.3 55.60H29.9M30.6 55.60H31.9" stroke="#828282"/>
<path d="M10.4 56.85H13.7M14.3 56.85H16.2M16.9 56.85H19.5M20.2 56.85H21.4" stroke="#828282"/>
<path d="M7.8 58.10H11.7" stroke="#828282"/>
<path d="M10.4 59.35H13.0M13.7 59.35H16.2M16.9 59.35H20.8M21.4 59.35H22.8M23.4 59.35H26.7M27.3 59.35H29.2M29.9 59.35H32.5" stroke="#828282"/>
<path d="M10.4 60.60H12.3M13.0 60.60H14.3M15.0 60.60H16.2M16.9 60.60H18.2" stroke="#828282"/>
<path d="M7.8 61.85H8.5" stroke="#828282"/>
<path d="M7.8 63.10H12.3M13.0 63.10H15.0M15.6 63.10H19.5M20.2 63.10H24.7M25.4 63.10H27.3M27.9 63.10H31.9M32.5 63.10H33.8M34.5 63.10H38.4M39.0 63.10H42.2M42.9 63.10H45.5" stroke="#828282"/>
<path d="M10.4 64.35H12.3M13.0 64.35H15.6M16.2 64.35H17.6M18.2 64.35H19.5M20.2 64.35H22.1" stroke="#828282"/>
<path d="M10.4 65.60H14.3M15.0 65.60H17.6M18.2 65.60H23.4M24.1 65.60H27.3" stroke="#828282"/>
<path d="M13.0 66.85H17.6M18.2 66.85H20.2M20.8 66.85H24.1M24.7 66.85H26.7M27.3 66.85H29.2M29.9 66.85H33.1M33.8 66.85H37.1M37.7 66.85H41.0M41.6 66.85H42.9M43.6 66.85H44.2" stroke="#828282"/>
<path d="M10.4 68.10H13.7M14.3 68.10H17.6M18.2 68.10H20.2M20.8 68.10H25.4M26.0 68.10H29.2M29.9 68.10H35.1M35.8 68.10H37.7M38.4 68.10H39.0" stroke="#828282"/>
<path d="M13.0 69.35H15.0M15.6 69.35H16.9M17.6 69.35H18.9M19.5 69.35H22.1M22.8 69.35H24.1" stroke="#828282"/>
<path d="M13.0 70.60H15.0M15.6 70.60H18.2" stroke="#828282"/>
<path d="M10.4 71.85H11.1" stroke="#828282"/>
<path d="M10.4 73.10H15.6M16.2 73.10H18.2" stroke="#828282"/>
<path d="M7.8 74.35H8.5" stroke="#828282"/>
<path d="M5.2 75.60H5.9" stroke="#828282"/>
<path d="M2.6 76.85H3.2" stroke="#828282"/>
<path d="M0.0 79.35H2.0M2.6 79.35H5.2" stroke="#555"/>
<path d="M2.6 80.60H3.9M4.5 80.60H7.2M7.8 80.60H10.4" stroke="#555"/>
<path d="M2.6 81.85H3.9M4.5 81.85H8.5M9.1 81.85H12.3M13.0 81.85H17.6M18.2 81.85H22.8M23.4 81.85H28.6M29.2 81.85H29.9" stroke="#555"/>
<path d="M5.2 83.10H9.8M10.4 83.10H15.0M15.6 83.10H16.9M17.6 83.10H20.8M21.4 83.10H24.7M25.4 83.10H26.0" stroke="#555"/>
<path d="M5.2 84.35H8.5M9.1 84.35H11.1M11.7 84.35H15.6" stroke="#555"/>
<path d="M1.3 86.85H2.0" stroke="#828282"/>
<path d="M0.0 88.10H1.3" stroke="#828282"/>
</g>
<path d="M0 20.80H48.5" stroke="#8db4e0" stroke-width="0.6"/>
</svg>
<div class="a" style="left:600.5px;top:69px;width:4.2px;height:91px;background:#c4c4c4;"></div>
<div class="a" style="left:600.5px;top:54.5px;width:6px;height:1.3px;background:#3a3a50;"></div>
<svg style="left:115.5px;top:233px" width="7" height="11" viewBox="0 0 7 11"><path d="M0.8 0.8h2l0.700 0.700l0.700-0.700h2M3.500 1.500v8M0.800 10.200h2l0.700-0.700l0.700 0.700h2" fill="none" stroke="#111" stroke-width="1.300"/></svg>
</div>
<div class="a" style="left:317.5px;top:34px;width:606.5px;height:21px;background:#f5f5f5;"></div>
<div class="a" style="left:719.7px;top:34px;width:94px;height:21.5px;background:#fff;"></div>
<div class="t" style="left:322.40px;top:39.58px;font-size:9.2px;line-height:11.04px;color:#7d5568;font-weight:bold;transform:scaleX(0.8730);transform-origin:0 50%;-webkit-text-stroke:0.3px;">C</div>
<div class="t" style="left:335.80px;top:38.06px;font-size:9.9px;line-height:11.88px;color:#7a7a7a;-webkit-text-stroke:0.22px #7a7a7a;transform:scaleX(0.8445);transform-origin:0 50%;">z_sample6_1.h</div>
<svg style="left:399.6px;top:42.300px" width="5" height="5" viewBox="0 0 5 5"><path d="M0.400 0.400l4.200 4.200M4.600 0.400l-4.200 4.200" stroke="#222" stroke-width="1.150"/></svg>
<div class="t" style="left:416.70px;top:39.58px;font-size:9.2px;line-height:11.04px;color:#7d5568;font-weight:bold;transform:scaleX(0.8730);transform-origin:0 50%;-webkit-text-stroke:0.3px;">C</div>
<div class="t" style="left:430.80px;top:38.06px;font-size:9.9px;line-height:11.88px;color:#7a7a7a;-webkit-text-stroke:0.22px #7a7a7a;transform:scaleX(0.8192);transform-origin:0 50%;">z_sample6_2.h</div>
<svg style="left:493px;top:42.300px" width="5" height="5" viewBox="0 0 5 5"><path d="M0.400 0.400l4.200 4.200M4.600 0.400l-4.200 4.200" stroke="#222" stroke-width="1.150"/></svg>
<div class="t" style="left:510.70px;top:39.58px;font-size:9.2px;line-height:11.04px;color:#7d5568;font-weight:bold;transform:scaleX(0.8730);transform-origin:0 50%;-webkit-text-stroke:0.3px;">C</div>
<div class="t" style="left:524.10px;top:38.06px;font-size:9.9px;line-height:11.88px;color:#7a7a7a;-webkit-text-stroke:0.22px #7a7a7a;transform:scaleX(0.8986);transform-origin:0 50%;">multi.h</div>
<svg style="left:557.4px;top:42.300px" width="5" height="5" viewBox="0 0 5 5"><path d="M0.400 0.400l4.200 4.200M4.600 0.400l-4.200 4.200" stroke="#222" stroke-width="1.150"/></svg>
<svg style="left:574.5px;top:41px" width="8" height="7" viewBox="0 0 8 7"><path d="M4.200 1.300c-1.800-0.800-3.400 0.300-3.400 2.100s1.600 2.900 3.400 2.100" fill="none" stroke="#9fb4c4" stroke-width="0.900"/><path d="M5 3.400h2.500" stroke="#9fb4c4" stroke-width="0.800"/></svg>
<div class="t" style="left:589.00px;top:38.06px;font-size:9.9px;line-height:11.88px;color:#7a7a7a;-webkit-text-stroke:0.22px #7a7a7a;transform:scaleX(0.8514);transform-origin:0 50%;">main.cpp</div>
<svg style="left:630.6px;top:42.300px" width="5" height="5" viewBox="0 0 5 5"><path d="M0.400 0.400l4.200 4.200M4.600 0.400l-4.200 4.200" stroke="#222" stroke-width="1.150"/></svg>
<div class="t" style="left:646.60px;top:39.58px;font-size:9.2px;line-height:11.04px;color:#7d5568;font-weight:bold;transform:scaleX(0.8730);transform-origin:0 50%;-webkit-text-stroke:0.3px;">C</div>
<div class="t" style="left:661.00px;top:38.06px;font-size:9.9px;line-height:11.88px;color:#7a7a7a;-webkit-text-stroke:0.22px #7a7a7a;transform:scaleX(0.8542);transform-origin:0 50%;">sevenled.h</div>
<svg style="left:708.6px;top:42.300px" width="5" height="5" viewBox="0 0 5 5"><path d="M0.400 0.400l4.200 4.200M4.600 0.400l-4.200 4.200" stroke="#222" stroke-width="1.150"/></svg>
<div class="t" style="left:726.00px;top:39.58px;font-size:9.2px;line-height:11.04px;color:#7d5568;font-weight:bold;transform:scaleX(0.8730);transform-origin:0 50%;-webkit-text-stroke:0.3px;">C</div>
<div class="t" style="left:740.20px;top:38.06px;font-size:9.9px;line-height:11.88px;color:#444;-webkit-text-stroke:0.22px #444;transform:scaleX(0.8296);transform-origin:0 50%;">z_sample6_7.h</div>
<svg style="left:802.6px;top:42.300px" width="5" height="5" viewBox="0 0 5 5"><path d="M0.400 0.400l4.200 4.200M4.600 0.400l-4.200 4.200" stroke="#222" stroke-width="1.150"/></svg>
<div class="t" style="left:819.30px;top:39.58px;font-size:9.2px;line-height:11.04px;color:#7d5568;font-weight:bold;transform:scaleX(0.8730);transform-origin:0 50%;-webkit-text-stroke:0.3px;">C</div>
<div class="t" style="left:833.80px;top:38.06px;font-size:9.9px;line-height:11.88px;color:#7a7a7a;-webkit-text-stroke:0.22px #7a7a7a;transform:scaleX(0.8296);transform-origin:0 50%;">z_sample6_6.h</div>
<svg style="left:896.2px;top:42.300px" width="5" height="5" viewBox="0 0 5 5"><path d="M0.400 0.400l4.200 4.200M4.600 0.400l-4.200 4.200" stroke="#222" stroke-width="1.150"/></svg>
<div class="t" style="left:912.90px;top:39.58px;font-size:9.2px;line-height:11.04px;color:#7d5568;font-weight:bold;transform:scaleX(0.8730);transform-origin:0 50%;-webkit-text-stroke:0.3px;">C</div>
<div class="out" style="top:430.8px">| mbed-os\targets      |     6204(+0) |   8(+0) |     530(+0) |</div>
<div class="out" style="top:445.7px">| Subtotals            | 118535(-416) | 260(+0) | 12176(-208) |</div>
<div class="out" style="top:460.7px">Total Static RAM memory (data + bss): 12436(-208) bytes</div>
<div class="out" style="top:475.7px">Total Flash memory (text + data): 118795(-416) bytes</div>
<div class="out" style="top:490.7px">Image: BUILD/NUCLEO_F411RE/ARMC6\mbed-os-sample.bin</div>
<div class="a" style="left:317.5px;top:417.3px;width:606.5px;height:20.2px;background:#f5f5f5;"></div>
<div class="a" style="left:386.5px;top:417.3px;width:64px;height:20.4px;background:#fff;"></div>
<svg style="left:322.500px;top:422.800px" width="9.600" height="9.600" viewBox="0 0 9 9"><g fill="none" stroke="#8a8a8a" stroke-width="0.800"><path d="M4.500 0.500l1.300 0.900l1.600-0.200l0.400 1.500l1.200 1l-0.700 1.400l0.300 1.600l-1.500 0.500l-0.900 1.300l-1.500-0.600l-1.500 0.600l-0.900-1.300l-1.500-0.500l0.300-1.600l-0.700-1.400l1.200-1l0.400-1.500l1.600 0.200z"/><circle cx="4.500" cy="4.600" r="1.500"/></g></svg>
<div class="t" style="left:335.90px;top:422.12px;font-size:9.8px;line-height:11.76px;color:#888;-webkit-text-stroke:0.1px #888;transform:scaleX(0.8595);transform-origin:0 50%;">Libraries</div>
<svg style="left:374.700px;top:425.700px" width="5" height="5" viewBox="0 0 5 5"><path d="M0.400 0.400l4.200 4.200M4.600 0.400l-4.200 4.200" stroke="#222" stroke-width="1.150"/></svg>
<svg style="left:392.800px;top:423.200px" width="8" height="9" viewBox="0 0 8 9"><path d="M0.600 0.300v8.400" stroke="#222" stroke-width="1"/><path d="M1.100 0.900c1.500-0.700 2.500 0.700 3.700 0.600c0.900 0 1.500-0.400 2.300-0.600v4.200c-0.800 0.200-1.400 0.600-2.300 0.600c-1.200 0.100-2.200-1.300-3.700-0.600z" fill="#222"/></svg>
<div class="t" style="left:405.40px;top:422.12px;font-size:9.8px;line-height:11.76px;color:#606060;-webkit-text-stroke:0.22px #606060;transform:scaleX(0.9382);transform-origin:0 50%;">Output</div>
<svg style="left:440.500px;top:425.700px" width="5" height="5" viewBox="0 0 5 5"><path d="M0.400 0.400l4.200 4.200M4.600 0.400l-4.200 4.200" stroke="#222" stroke-width="1.150"/></svg>
<div class="a" style="left:802px;top:420.500px;width:84.500px;height:14.800px;border:1px solid #c9c9c9;border-radius:2px;background:#fff"></div>
<div class="t" style="left:805.50px;top:422.12px;font-size:9.8px;line-height:11.76px;color:#555;-webkit-text-stroke:0.22px #555;transform:scaleX(0.8811);transform-origin:0 50%;">mbed-os-sample</div>
<svg style="left:876.500px;top:426.300px" width="6" height="4" viewBox="0 0 6 4"><path d="M0.500 0.500L3 3L5.500 0.500" fill="none" stroke="#333" stroke-width="1.100"/></svg>
<svg style="left:893px;top:422.500px" width="10" height="10" viewBox="0 0 10 10"><g stroke="#333" stroke-width="1.100"><path d="M4.500 2h4.500M1 4.400h8M1 6.800h8M1 9.200h8"/></g><path d="M0.800 0.300l2.600 2.600M3.400 0.300l-2.600 2.600" stroke="#c0392b" stroke-width="0.900"/></svg>
<svg style="left:907.500px;top:422.500px" width="8" height="10" viewBox="0 0 8 10"><g fill="none" stroke="#9a9a9a" stroke-width="0.900"><rect x="0.800" y="4.600" width="6.200" height="4.800" rx="0.800"/><path d="M2.100 4.600v-1.700a1.800 1.800 0 0 1 3.600 0"/></g></svg>
<div class="a" style="left:77.5px;top:526px;width:847px;height:12.3px;background:#3b6af1;"></div>
<svg style="left:86.500px;top:527.800px" width="9" height="8" viewBox="0 0 9 8"><path d="M0.600 1.200h2.600l0.900 1h4.300v4.800h-7.800z" fill="none" stroke="#fff" stroke-width="0.900" stroke-linejoin="round"/></svg>
<div class="t" style="left:99.10px;top:526.36px;font-size:9.4px;line-height:11.28px;color:#fff;font-weight:bold;transform:scaleX(0.7498);transform-origin:0 50%;">mbed-os-sample</div>
<svg style="left:163px;top:528px" width="24" height="8" viewBox="0 0 24 8"><g stroke="#fff" stroke-width="0.800" fill="none"><circle cx="3.900" cy="4" r="3.400"/><path d="M2.600 2.700l2.600 2.600M5.200 2.700l-2.600 2.600"/><path d="M19.500 0.600l3.700 6.800h-7.400z" stroke-linejoin="round"/><path d="M19.500 2.900v2.300M19.500 5.900v0.700"/></g></svg>
<div class="t" style="left:171.70px;top:526.36px;font-size:9.4px;line-height:11.28px;color:#fff;font-weight:bold;transform:scaleX(0.9374);transform-origin:0 50%;">0</div>
<div class="t" style="left:188.50px;top:526.36px;font-size:9.4px;line-height:11.28px;color:#fff;font-weight:bold;transform:scaleX(0.9183);transform-origin:0 50%;">6</div>
<div class="t" style="left:725.00px;top:526.36px;font-size:9.4px;line-height:11.28px;color:#fff;font-weight:bold;transform:scaleX(0.7279);transform-origin:0 50%;">Ln 16, Col 21</div>
<div class="t" style="left:775.10px;top:526.36px;font-size:9.4px;line-height:11.28px;color:#fff;font-weight:bold;transform:scaleX(0.6425);transform-origin:0 50%;">CRLF</div>
<div class="t" style="left:799.00px;top:526.36px;font-size:9.4px;line-height:11.28px;color:#fff;font-weight:bold;transform:scaleX(0.7398);transform-origin:0 50%;">UTF-8</div>
<div class="t" style="left:825.80px;top:526.36px;font-size:9.4px;line-height:11.28px;color:#fff;font-weight:bold;transform:scaleX(0.6927);transform-origin:0 50%;">Spaces: 4</div>
<div class="t" style="left:864.10px;top:526.36px;font-size:9.4px;line-height:11.28px;color:#fff;font-weight:bold;transform:scaleX(0.7654);transform-origin:0 50%;">C++</div>
<svg style="left:886.500px;top:527.600px" width="9" height="9" viewBox="0 0 9 9"><path d="M4.500 0.500c-2 0-2.800 1.500-2.800 3.200c0 1.600-0.500 2.300-1.200 3h8c-0.700-0.700-1.200-1.400-1.200-3c0-1.700-0.800-3.200-2.800-3.200zM3.500 7.400a1 1 0 0 0 2 0z" fill="#fff"/></svg>
<div class="t" style="left:895.70px;top:526.36px;font-size:9.4px;line-height:11.28px;color:#fff;font-weight:bold;transform:scaleX(0.8800);transform-origin:0 50%;">4</div>
<svg style="left:907.800px;top:528px" width="8" height="8" viewBox="0 0 8 8"><g fill="none" stroke="#fff" stroke-width="0.900"><rect x="0.500" y="0.800" width="7" height="6.400" rx="0.600"/><path d="M0.500 2.900h7"/></g></svg>
<div class="a" style="left:918.5px;top:523.2px;width:5.5px;height:1.2px;background:#555;"></div>
<div class="a" style="left:77px;top:21px;width:1px;height:518px;background:#5b93d6;"></div>
<div class="a" style="left:924px;top:21px;width:1px;height:518px;background:#5b93d6;"></div>
<div class="a" style="left:0;top:538.200px;width:996px;height:24.800px;background:linear-gradient(90deg,#113a5e 0,#12355a 3%,#15263f 26%,#14243c 100%)"></div>
<div class="a" style="left:29.800px;top:539px;width:213.700px;height:24px;background:#e9ebee"></div>
<div class="a" style="left:488.700px;top:538.200px;width:29.200px;height:24.800px;background:#2a3f5e"></div>
<svg style="left:0;top:538px" width="996" height="25" viewBox="0 538 996 25">
<!-- start -->
<g fill="#fff"><path d="M9.300 546.800l4.300-0.600v4.200h-4.300zM14.200 546.100l5.300-0.800v5.100h-5.300zM9.300 551h4.300v4.200l-4.300-0.600zM14.200 551h5.300v5.100l-5.300-0.800z"/></g>
<!-- search icon -->
<g fill="none" stroke="#222" stroke-width="1.100"><circle cx="43" cy="549.500" r="3.300"/><path d="M40.600 552l-3 3.300"/></g>
<!-- cortana, taskview -->
<circle cx="258.400" cy="550.800" r="4.200" fill="none" stroke="#fff" stroke-width="1.300"/>
<g fill="none" stroke="#fff" stroke-width="0.900"><rect x="284" y="548" width="5.600" height="5.600"/><path d="M282.800 546.500v1M282.800 554v1.200M291.600 546.500v8.700M290.500 548.800h2.200M290.500 552.800h2.200"/></g>
<!-- explorer -->
<g transform="translate(320 550.7) scale(1.1) translate(-320 -551)"><path d="M313.500 545.500h5l1 1.200h7v10.300h-13z" fill="#f3c341"/><path d="M313.500 549h13v8h-13z" fill="#f8d96c"/><path d="M316.500 553h7v4h-7z" fill="#4a90d6"/></g>
<!-- edge -->
<g transform="translate(351 550.7) scale(1.17) translate(-351 -551)"><circle cx="351" cy="551" r="6.600" fill="#1f8bd6"/><path d="M345 553c0-5 8-7 12-3c0 2-2 3-5 3c-2 0-2 3 2 4c-4 2-9 0-9-4z" fill="#3cc8a0"/><path d="M349 554.500c1-3 7-2 7.800-4.500c0.500 4-2 7-5.800 7.500c-1.500-0.500-2.300-1.800-2-3z" fill="#155fa8"/></g>
<!-- chrome -->
<g transform="translate(380.8 550.7) scale(1.13) translate(-380.8 -551)"><circle cx="380.800" cy="551" r="6.700" fill="#e44a3a"/><path d="M380.800 551l-5.800 3.400a6.700 6.700 0 0 0 8 3z" fill="#35a853"/><path d="M380.800 551l3 6.300a6.700 6.700 0 0 0 3.400-8.300z" fill="#f6c231"/><circle cx="380.800" cy="551" r="3" fill="#fff"/><circle cx="380.800" cy="551" r="2.300" fill="#4a86e8"/></g>
<!-- outlook -->
<g transform="translate(411.7 550.9000000000001) scale(1.12) translate(-411.7 -551.2)"><rect x="408" y="545.500" width="10.500" height="11" fill="#2a8be0"/><rect x="411.500" y="549" width="7" height="7.500" fill="#6ab8f2"/><rect x="405" y="547.500" width="7.500" height="7.500" rx="0.800" fill="#0f64b8"/><circle cx="408.700" cy="551.200" r="1.900" fill="none" stroke="#fff" stroke-width="1"/></g>
<!-- weather -->
<g transform="translate(442.3 550.7) scale(1.15) translate(-442.3 -551)"><circle cx="441.500" cy="550.500" r="6.300" fill="#f6a51c"/><path d="M442.500 556.200h5.600a1.800 1.800 0 0 0 0-3.600a2.500 2.500 0 0 0-4.700-0.400a2 2 0 0 0-0.900 4z" fill="#f1f1f1"/></g>
<!-- W -->
<g transform="translate(472.2 550.7) scale(1.1) translate(-472.2 -551)"><circle cx="472.200" cy="551" r="6.900" fill="#fff"/><path d="M468.600 549.300v2.200c0 1.700 3.200 1.700 3.200 0v-2.200M471.800 551.500c0 1.700 3.200 1.700 3.200 0v-2.200" fill="none" stroke="#3d8fd1" stroke-width="1.100"/></g>
<!-- mbed -->
<g transform="translate(503 550.7) scale(1.12) translate(-503 -551)"><rect x="496.500" y="544.500" width="13" height="13" rx="1" fill="#1f3344"/><path d="M505.600 547.300c-1.700-1-4.600-0.600-4.600 1.200c0 2.400 4.800 1.800 4.800 4.500c0 2-3.200 2.300-5 1.200" fill="none" stroke="#3fc0d2" stroke-width="1.300"/></g>
<!-- T laptop -->
<g transform="translate(533 550.7) scale(1.12) translate(-533 -551)"><rect x="527.500" y="545" width="11" height="8.500" fill="#f2d24a"/><rect x="529" y="546.300" width="8" height="6" fill="#2a2a2a"/><path d="M531 547.500h4M533 547.500v4" stroke="#f2d24a" stroke-width="1.200"/><path d="M525.500 557l2-3h11l2 3z" fill="#d8d8d8"/></g>
<!-- acrobat -->
<g transform="translate(563.5 550.7) scale(1.12) translate(-563.5 -551)"><rect x="557" y="544.500" width="13" height="13" rx="1.300" fill="#c8201c"/><path d="M560 555c2-2 3.200-5 3.500-7.500c0.500 2.500 2 4.800 4 5.800c-2.500 0-5 0.500-7.500 1.700z" fill="none" stroke="#fff" stroke-width="0.900"/></g>
<!-- zoom -->
<g transform="translate(594.3 550.7) scale(1.1) translate(-594.3 -551)"><rect x="587.500" y="544.500" width="13.500" height="13" rx="3.500" fill="#4a8cf0"/><rect x="590" y="548.500" width="5.800" height="4.800" rx="1" fill="#fff"/><path d="M596.300 550.300l2.500-1.600v4.600l-2.500-1.600z" fill="#fff"/></g>
<!-- whiteboard -->
<g transform="translate(625 550.7) scale(1.15) translate(-625 -551)"><rect x="618.500" y="546.500" width="12" height="8.500" fill="#f4f4f4"/><path d="M621 557l1.500-2M629 557l-1.500-2" stroke="#ccc" stroke-width="0.900"/><path d="M625 553l6.500-7.500l1.200 1l-6.500 7.500l-1.800 0.600z" fill="#e2552f"/></g>
<!-- running underlines -->
<g fill="#8fb7e6"><rect x="460.500" y="561.300" width="25" height="1.700"/><rect x="488.700" y="561.300" width="29.200" height="1.700"/><rect x="520.500" y="561.300" width="26" height="1.700"/><rect x="551" y="561.300" width="26" height="1.700"/><rect x="582" y="561.300" width="26" height="1.700"/><rect x="612" y="561.300" width="26" height="1.700"/></g>
<!-- tray -->
<g fill="none" stroke="#fff" stroke-width="1"><path d="M800.500 552.500l3-3l3 3"/>
<rect x="816.500" y="546.500" width="4.600" height="8.600" rx="1.200"/><path d="M815.300 545.300h7M815.300 556.400h7"/><circle cx="819.500" cy="549.500" r="0.800"/>
<path d="M829.600 552.300a3.300 3.300 0 0 0 6.600 0M832.900 555.600v1.800"/>
<rect x="845" y="548.300" width="8.600" height="4.800"/><path d="M854.200 549.800v1.800M843.500 547.200l3 1.800"/>
<path d="M861.300 556c0-3.500 2.800-6.300 6.300-6.300M863.600 556c0-2.200 1.800-4 4-4M865.800 556c0-1 0.800-1.800 1.800-1.800" />
<path d="M873.500 549.700h1.800l2.500-2.200v7.600l-2.500-2.200h-1.800zM880 549.600l3 3M883 549.600l-3 3"/>
<path d="M892.500 555l6-6.500a2 2 0 0 1 3 2.600l-3.300 3.700M894 552.500a2 2 0 0 0-3 2.600a2 2 0 0 0 3 0.200"/>
</g>
<rect x="831.300" y="544.800" width="3.200" height="7.800" rx="1.600" fill="#fff"/>
<!-- notification -->
<path d="M969.500 545.500h10.500v8h-3.500l-2.600 2.500v-2.500h-4.400z" fill="none" stroke="#fff" stroke-width="0.900"/>
</svg>
<div class="t" style="left:54.700px;top:547.400px;font-size:8.300px;color:#3a3a3a;transform:scaleX(0.932);transform-origin:0 0">ここに入力して検索</div>
<div class="t" style="left:906.500px;top:544.500px;font-size:13.500px;color:#fff">A</div>
<div class="t" style="left:932.600px;top:541.300px;font-size:8px;color:#fff;transform:scaleX(0.86);transform-origin:0 0">12:59</div>
<div class="t" style="left:923.200px;top:552.300px;font-size:8px;color:#fff;transform:scaleX(0.905);transform-origin:0 0">2021/04/04</div>
<!-- small widget bottom right -->
<div class="a" style="left:977.500px;top:521.500px;width:20px;height:31px;border-radius:3px 0 0 3px;background:#ababab"></div>
<svg style="left:977px;top:521px" width="19" height="32" viewBox="977 521 19 32"><path d="M989 525.800l-4.500 2.800l4.500 2.800z" fill="#444"/><rect x="982.500" y="536" width="3.300" height="3.300" fill="#f0b429"/><path d="M988 536l3.600 1.700l-3.600 1.700z" fill="#3f7be0"/><circle cx="984" cy="544.500" r="1.800" fill="#5bb04a"/><rect x="987.800" y="542.800" width="3.300" height="3.300" fill="#f08a24"/></svg>

</body></html>
